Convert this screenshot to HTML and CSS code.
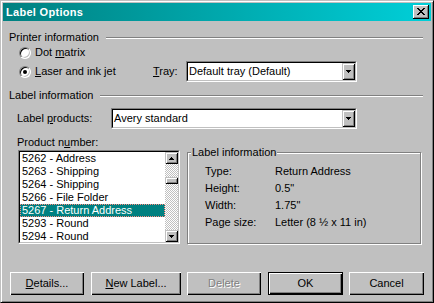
FILE: index.html
```html
<!DOCTYPE html>
<html>
<head>
<meta charset="utf-8">
<title>Label Options</title>
<link rel="stylesheet" href="styles.css">
</head>
<body>
<div class="dialog">
  <div class="titlebar">
    <span class="title">Label Options</span>
    <div class="close">
      <svg width="8" height="7" viewBox="0 0 8 7" shape-rendering="crispEdges">
        <path d="M0 0h2v1h-2zM6 0h2v1h-2zM1 1h2v1h-2zM5 1h2v1h-2zM2 2h4v1h-4zM3 3h2v1h-2zM2 4h4v1h-4zM1 5h2v1h-2zM5 5h2v1h-2zM0 6h2v1h-2zM6 6h2v1h-2z" fill="#000"/>
      </svg>
    </div>
  </div>
  <div class="content">
    <div class="group-head"><span>Printer information</span><div class="etch"></div></div>
    <div class="radio-row r1">
      <span class="radio"></span><span class="rlabel">Dot <u>m</u>atrix</span>
    </div>
    <div class="radio-row r2">
      <span class="radio checked"></span><span class="rlabel"><u>L</u>aser and ink jet</span>
      <span class="tray-label"><u>T</u>ray:</span>
      <div class="combo tray">
        <div class="combo-in">
          <span class="combo-text">Default tray (Default)</span>
          <span class="dd"><svg width="5" height="3" viewBox="0 0 5 3" shape-rendering="crispEdges"><path d="M0 0h5v1h-5zM1 1h3v1h-3zM2 2h1v1h-1z" fill="#000"/></svg></span>
        </div>
      </div>
    </div>
    <div class="group-head gh2"><span>Label information</span><div class="etch"></div></div>
    <div class="prod-row">
      <span class="prod-label">Label <u>p</u>roducts:</span>
      <div class="combo products">
        <div class="combo-in">
          <span class="combo-text">Avery standard</span>
          <span class="dd"><svg width="5" height="3" viewBox="0 0 5 3" shape-rendering="crispEdges"><path d="M0 0h5v1h-5zM1 1h3v1h-3zM2 2h1v1h-1z" fill="#000"/></svg></span>
        </div>
      </div>
    </div>
    <div class="pn-label">Product n<u>u</u>mber:</div>
    <div class="lower">
      <div class="listbox">
        <div class="listbox-in">
          <div class="items">
            <div class="item">5262 - Address</div>
            <div class="item">5263 - Shipping</div>
            <div class="item">5264 - Shipping</div>
            <div class="item">5266 - File Folder</div>
            <div class="item sel">5267 - Return Address</div>
            <div class="item">5293 - Round</div>
            <div class="item">5294 - Round</div>
          </div>
          <div class="scrollbar">
            <div class="sb-btn"><svg width="5" height="3" viewBox="0 0 5 3" shape-rendering="crispEdges"><path d="M2 0h1v1h-1zM1 1h3v1h-3zM0 2h5v1h-5z" fill="#000"/></svg></div>
            <div class="track"><div class="thumb"></div></div>
            <div class="sb-btn"><svg width="5" height="3" viewBox="0 0 5 3" shape-rendering="crispEdges"><path d="M0 0h5v1h-5zM1 1h3v1h-3zM2 2h1v1h-1z" fill="#000"/></svg></div>
          </div>
        </div>
      </div>
      <div class="infobox">
        <span class="legend">Label information</span>
        <div class="info-grid">
          <span>Type:</span><span>Return Address</span>
          <span>Height:</span><span>0.5"</span>
          <span>Width:</span><span>1.75"</span>
          <span>Page size:</span><span>Letter (8 ½ x 11 in)</span>
        </div>
      </div>
    </div>
    <div class="buttons">
      <div class="btn details"><span><u>D</u>etails...</span></div>
      <div class="btn newlabel"><span><u>N</u>ew Label...</span></div>
      <div class="btn delete disabled"><span>Delete</span></div>
      <div class="btn ok"><span>OK</span></div>
      <div class="btn cancel"><span>Cancel</span></div>
    </div>
  </div>
</div>
</body>
</html>
```

FILE: styles.css
```css
* {
  box-sizing: border-box;
  margin: 0;
  padding: 0;
}

html, body {
  width: 434px;
  height: 303px;
  overflow: hidden;
  background: #c0c0c0;
}

body {
  font-family: "Liberation Sans", Arial, sans-serif;
  font-size: 11px;
  line-height: 13px;
  color: #000;
}

u {
  text-decoration-thickness: 1px;
  text-underline-offset: 1px;
}

.dialog {
  width: 434px;
  height: 303px;
  border: 1px solid;
  border-color: #c0c0c0 #000 #000 #c0c0c0;
  box-shadow: inset 1px 1px #fff, inset -1px -1px #808080;
  padding: 2px;
  display: flex;
  flex-direction: column;
  background: #c0c0c0;
}

.titlebar {
  flex: none;
  height: 18px;
  background: linear-gradient(to right, #008080, #00cfd8);
  display: flex;
  align-items: center;
  padding: 0 2px 0 3px;
}

.title {
  flex: 1;
  color: #fff;
  font-weight: bold;
  letter-spacing: 0.3px;
}

.close {
  width: 16px;
  height: 14px;
  background: #c0c0c0;
  box-shadow: inset -1px -1px #000, inset 1px 1px #fff, inset -2px -2px #808080;
  display: flex;
  align-items: center;
  justify-content: center;
  padding: 0 1px 1px 0;
}

.close svg {
  display: block;
}

.content {
  flex: 1;
  display: flex;
  flex-direction: column;
  padding: 0 8px 0 6px;
}

.group-head {
  display: flex;
  align-items: center;
  height: 13px;
  margin-top: 10px;
  white-space: nowrap;
}

.gh2 {
  margin-top: 7px;
}

.etch {
  flex: 1;
  height: 2px;
  border-top: 1px solid #808080;
  border-bottom: 1px solid #fff;
  margin-left: 7px;
}

.radio-row {
  display: flex;
  align-items: center;
  white-space: nowrap;
}

.r1 {
  height: 17px;
}

.r2 {
  height: 21px;
}

.radio {
  position: relative;
  flex: none;
  width: 12px;
  height: 12px;
  margin: 0 4px 0 10px;
  border-radius: 50%;
  background: #fff;
  border: 1px solid;
  border-color: #808080 #fff #fff #808080;
  box-shadow: inset 1px 1px #000, inset -1px -1px #c0c0c0;
}

.radio.checked::after {
  content: "";
  position: absolute;
  left: 3px;
  top: 3px;
  width: 4px;
  height: 4px;
  border-radius: 50%;
  background: #000;
}

.rlabel {
  width: 118px;
}

.tray-label {
  width: 33px;
}

.combo {
  flex: none;
  height: 21px;
  border: 1px solid;
  border-color: #808080 #fff #fff #808080;
}

.combo-in {
  height: 100%;
  border: 1px solid;
  border-color: #000 #c0c0c0 #c0c0c0 #000;
  background: #fff;
  display: flex;
  align-items: center;
}

.combo-text {
  flex: 1;
  padding-left: 1px;
  white-space: nowrap;
}

.dd,
.sb-btn {
  flex: none;
  width: 13px;
  background: #c0c0c0;
  box-shadow: inset 1px 1px #c0c0c0, inset -1px -1px #000, inset 2px 2px #fff, inset -2px -2px #808080;
  display: flex;
  align-items: center;
  justify-content: center;
}

.dd {
  height: 17px;
}

.dd svg,
.sb-btn svg {
  display: block;
}

.tray {
  width: 171px;
}

.products {
  width: 246px;
}

.prod-row {
  display: flex;
  align-items: center;
  height: 21px;
  margin-top: 6px;
  padding-left: 8px;
}

.prod-label {
  width: 94px;
}

.pn-label {
  margin-top: 7px;
  height: 13px;
  padding-left: 8px;
}

.lower {
  display: flex;
  align-items: flex-start;
  margin-top: 1px;
}

.listbox {
  flex: none;
  width: 162px;
  height: 94px;
  margin-left: 9px;
  border: 1px solid;
  border-color: #808080 #fff #fff #808080;
}

.listbox-in {
  height: 100%;
  border: 1px solid;
  border-color: #000 #c0c0c0 #c0c0c0 #000;
  background: #fff;
  display: flex;
}

.items {
  flex: 1;
  overflow: hidden;
}

.item {
  height: 13px;
  padding-left: 2px;
  white-space: nowrap;
}

.item.sel {
  background: #008080;
  color: #fff;
  outline: 1px dotted #ff8a80;
  outline-offset: -1px;
}

.scrollbar {
  flex: none;
  width: 13px;
  display: flex;
  flex-direction: column;
}

.sb-btn {
  height: 12px;
}

.track {
  flex: 1;
  background: repeating-conic-gradient(#c0c0c0 0 25%, #fff 0 50%) 0 0 / 2px 2px;
}

.thumb {
  height: 7px;
  margin-top: 13px;
  background: #c0c0c0;
  box-shadow: inset 1px 1px #c0c0c0, inset -1px -1px #000, inset 2px 2px #fff, inset -2px -2px #808080;
}

.infobox {
  position: relative;
  flex: none;
  width: 234px;
  height: 92px;
  margin: 2px 0 0 7px;
  border: 1px solid #808080;
  box-shadow: inset 1px 1px #fff, 1px 1px #fff;
  padding: 10px 0 0 17px;
}

.legend {
  position: absolute;
  left: 3px;
  top: -7px;
  padding: 0 1px;
  background: #c0c0c0;
  white-space: nowrap;
}

.info-grid {
  display: grid;
  grid-template-columns: 70px auto;
  grid-auto-rows: 17px;
  align-items: center;
  white-space: nowrap;
}

.buttons {
  display: flex;
  height: 23px;
  margin-top: 28px;
  padding-left: 1px;
}

.btn {
  flex: none;
  width: 74px;
  height: 23px;
  display: flex;
  align-items: center;
  justify-content: center;
  background: #c0c0c0;
  box-shadow: inset 1px 1px #fff, inset -1px -1px #000, inset -2px -2px #808080;
  white-space: nowrap;
}

.newlabel {
  width: 90px;
  margin-left: 7px;
}

.delete {
  margin-left: 6px;
}

.disabled {
  color: #808080;
  text-shadow: 1px 1px #fff;
}

.ok {
  width: 75px;
  margin-left: 7px;
  border: 1px solid #000;
}

.cancel {
  width: 75px;
  margin-left: 6px;
}
```
